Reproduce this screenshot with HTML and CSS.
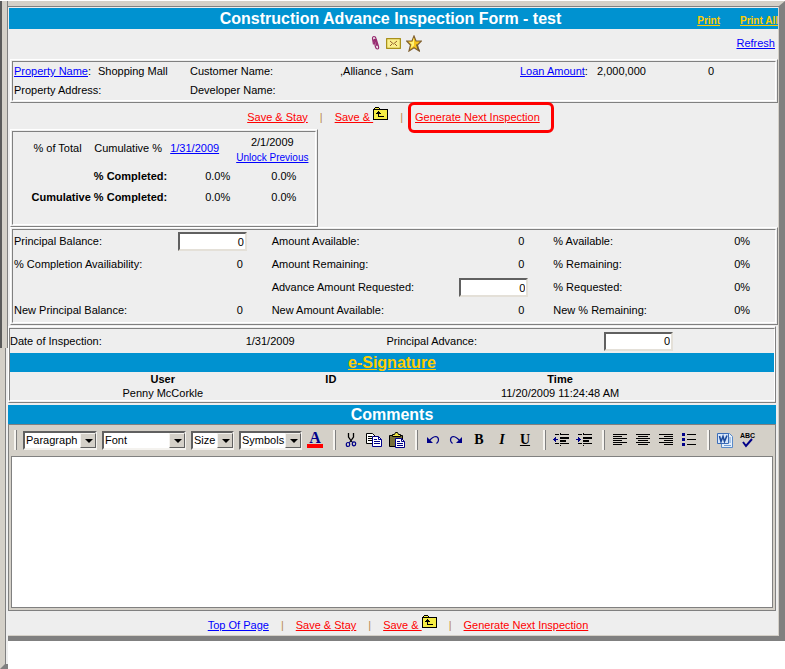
FILE: index.html
```html
<!DOCTYPE html>
<html lang="en">
<head>
<meta charset="utf-8">
<title>Construction Advance Inspection Form - test</title>
<link rel="stylesheet" href="styles.css">
</head>
<body>
<svg class="defs" aria-hidden="true">
  <symbol id="folder" viewBox="0 0 15 13">
    <path d="M1 3h13v9H1zM2 1h4v2H2z" fill="#f5ed45"/>
    <path d="M2 0h4v1H2zM1 1h1v1H1zM6 1h1v1H6zM0 2h15v1H0zM0 2h1v11H0zM14 2h1v11h-1zM0 12h15v1H0zM5 4h1v1H5zM4 5h3v1H4zM3 6h5v1H3zM5 7h1v3H5zM5 9h6v1H5z" fill="#000"/>
  </symbol>
</svg>
<div class="page">
  <div class="rail"><div class="rail-upper"></div><div class="rail-lower"></div></div>
  <main class="frame" id="top">
    <header class="bar title-bar">
      <h1>Construction Advance Inspection Form - test</h1>
      <nav class="print"><a href="#">Print</a><a href="#">Print All</a></nav>
    </header>

    <div class="icon-row">
      <div class="icon-links">
        <a href="#" aria-label="Attachments"><svg width="10" height="16" viewBox="0 0 10 16" fill="none" stroke="#96286e" stroke-width="1.200"><path d="M2.500 9.500L1.500 3.500Q1.500 1.500 3 1.500Q4.500 1.500 5 3.500L7.500 11.500Q8 14 6.500 14Q5 14 4.500 12L3 5.500Q3 4 4 4.500L6 11"/></svg></a>
        <a href="#" aria-label="E-mail"><svg width="15" height="11" viewBox="0 0 15 11"><rect x=".5" y=".5" width="14" height="10" rx="1" fill="#fbf08c" stroke="#a8901c" stroke-width="1.500"/><path d="M4 3l3.500 3L11 3M4 8l2-2M11 8L9 6" fill="none" stroke="#94602c"/></svg></a>
        <a href="#" aria-label="Favorites"><svg width="16" height="17" viewBox="0 0 16 17"><path d="M8 1l2 5h5.400l-4 4 1.800 6L8 12.800 3 16l1.500-6L.6 6H6z" fill="#f6c41c" stroke="#806030" stroke-width="1.200"/><path d="M8 2.500v8l-3.500 3 1.300-4.300L3 7h3.500z" fill="#fff27a"/><path d="M10.500 9.500l1.500 5L14 15.500" fill="none" stroke="#66553a"/></svg></a>
      </div>
      <a class="refresh" href="#">Refresh</a>
    </div>

    <section class="panel">
      <div class="panel-in property">
        <span><a href="#">Property Name</a>:</span><span>Shopping Mall</span><span>Customer Name:</span><span>,Alliance , Sam</span><span><a href="#">Loan Amount</a>:</span><span>2,000,000</span><span>0</span>
        <span class="wide">Property Address:</span><span class="wide">Developer Name:</span>
      </div>
    </section>

    <nav class="actions">
      <a href="#">Save &amp; Stay</a><i>|</i>
      <a class="save-up" href="#">Save &amp;&nbsp;<svg width="15" height="13"><use href="#folder"/></svg></a><i>|</i>
      <span class="callout"><a href="#">Generate Next Inspection</a></span>
    </nav>

    <section class="panel totals">
      <div class="panel-in">
        <table>
          <thead>
            <tr><th class="c-total">% of Total</th><th class="c-cumulative">Cumulative %</th><th class="c-date"><a href="#">1/31/2009</a></th><th class="c-next">2/1/2009<br><a class="small" href="#">Unlock Previous</a></th></tr>
          </thead>
          <tbody>
            <tr><th colspan="2">% Completed:</th><td>0.0%</td><td class="c-last">0.0%</td></tr>
            <tr><th colspan="2">Cumulative % Completed:</th><td>0.0%</td><td class="c-last">0.0%</td></tr>
          </tbody>
        </table>
      </div>
    </section>

    <section class="panel">
      <div class="panel-in balances">
        <label for="principal">Principal Balance:</label><input id="principal" type="text" value="0">
        <span>Amount Available:</span><output>0</output>
        <span>% Available:</span><output>0%</output>
        <span>% Completion Availiability:</span><output>0</output>
        <span>Amount Remaining:</span><output>0</output>
        <span>% Remaining:</span><output>0%</output>
        <span></span><span></span>
        <label for="advance">Advance Amount Requested:</label><input id="advance" type="text" value="0">
        <span>% Requested:</span><output>0%</output>
        <span>New Principal Balance:</span><output>0</output>
        <span>New Amount Available:</span><output>0</output>
        <span>New % Remaining:</span><output>0%</output>
      </div>
    </section>

    <section class="panel signature">
      <div class="panel-in">
        <div class="inspection">
          <span>Date of Inspection:</span><span>1/31/2009</span>
          <label for="padvance">Principal Advance:</label><input id="padvance" type="text" value="0">
        </div>
        <h2 class="bar"><a href="#">e-Signature</a></h2>
        <table>
          <thead><tr><th class="c-user">User</th><th class="c-id">ID</th><th>Time</th></tr></thead>
          <tbody><tr><td>Penny McCorkle</td><td></td><td>11/20/2009 11:24:48 AM</td></tr></tbody>
        </table>
      </div>
    </section>

    <section class="comments">
      <h2 class="bar"><label for="comments">Comments</label></h2>
      <div class="editor">
        <div class="toolbar">
          <span class="sep"></span>
          <div class="group selects">
            <span class="pick paragraph"><select aria-label="Paragraph"><option>Paragraph</option></select></span>
            <span class="pick font"><select aria-label="Font"><option>Font</option></select></span>
            <span class="pick size"><select aria-label="Size"><option>Size</option></select></span>
            <span class="pick symbols"><select aria-label="Symbols"><option>Symbols</option></select></span>
            <button type="button" class="glyph color" aria-label="Text color"><span>A</span></button>
          </div>
          <span class="sep"></span>
          <div class="group">
            <button type="button" aria-label="Cut"><svg viewBox="0 0 16 16"><path d="M5.500 1v4L9 10M10.500 1v4L7 10" fill="none" stroke="#000" stroke-width="1.300"/><path d="M7 9.500L6 11M9 9.500l1 1.500" stroke="#008"/><ellipse cx="5" cy="12.500" rx="1.700" ry="2" fill="none" stroke="#008" stroke-width="1.200"/><ellipse cx="11" cy="11.800" rx="1.700" ry="2" fill="none" stroke="#008" stroke-width="1.200"/></svg></button>
            <button type="button" aria-label="Copy"><svg viewBox="0 0 16 16"><path d="M.5 1.500h6l3 3v7h-9z" fill="#fff" stroke="#000"/><path d="M2 4.500h4M2 6.500h5M2 8.500h5" stroke="#000"/><path d="M6.500 4.500h6l3 3v7h-9z" fill="#fff" stroke="#008"/><path d="M12.500 4.500v3h3M8 7.500h3M8 9.500h6M8 11.500h6" fill="none" stroke="#008"/></svg></button>
            <button type="button" aria-label="Paste"><svg viewBox="0 0 16 16"><path d="M.5 3.500h13v11H.5z" fill="#77703a" stroke="#000"/><path d="M3.500 2.500h2l1-2h2l1 2h2v2h-8z" fill="#f2e744" stroke="#000"/><path d="M6.500 6.500h6l3 3v6h-9z" fill="#fff" stroke="#008"/><path d="M12.500 6.500v3h3M8 9.500h3M8 11.500h6M8 13.500h6" fill="none" stroke="#008"/></svg></button>
          </div>
          <span class="sep"></span>
          <div class="group">
            <button type="button" aria-label="Undo"><svg viewBox="0 0 16 16"><path d="M2 5v6h6z" fill="#008"/><path d="M4.500 8.500Q8 4.500 11 4.500Q13.500 5 13.500 8Q13.500 10 11.500 11.500" fill="none" stroke="#008" stroke-width="1.200"/></svg></button>
            <button type="button" aria-label="Redo"><svg viewBox="0 0 16 16"><path d="M14 5v6H8z" fill="#008"/><path d="M11.500 8.500Q8 4.500 5 4.500Q2.500 5 2.500 8Q2.500 10 4.500 11.500" fill="none" stroke="#008" stroke-width="1.200"/></svg></button>
            <button type="button" class="glyph bold">B</button>
            <button type="button" class="glyph italic">I</button>
            <button type="button" class="glyph underline">U</button>
          </div>
          <span class="sep"></span>
          <div class="group">
            <button type="button" aria-label="Decrease indent"><svg viewBox="0 0 16 16" shape-rendering="crispEdges"><path d="M2 2.500h4M8 2.500h8M2 11.500h4M8 11.500h8M7.500 1v2M7.500 11v1M7.500 13v1" stroke="#000"/><path d="M7 5h9v2H7zM7 8h6v2H7z"/><path d="M0 7.500h5" stroke="#008"/><path d="M1 6h1v3H1zM2 5h1v5H2z" fill="#008"/></svg></button>
            <button type="button" aria-label="Increase indent"><svg viewBox="0 0 16 16" shape-rendering="crispEdges"><path d="M2 2.500h4M8 2.500h8M2 11.500h4M8 11.500h8M7.500 1v2M7.500 11v1M7.500 13v1" stroke="#000"/><path d="M7 5h9v2H7zM7 8h6v2H7z"/><path d="M0 7.500h5" stroke="#008"/><path d="M3 6h1v3H3zM2 5h1v5H2z" fill="#008"/></svg></button>
          </div>
          <span class="sep"></span>
          <div class="group">
            <button type="button" aria-label="Align left"><svg viewBox="0 0 16 16" shape-rendering="crispEdges"><path d="M1 2.500h14M1 4.500h9M1 6.500h14M1 8.500h9M1 10.500h14M1 12.500h9" stroke="#000"/></svg></button>
            <button type="button" aria-label="Align center"><svg viewBox="0 0 16 16" shape-rendering="crispEdges"><path d="M1 2.500h14M3 4.500h10M1 6.500h14M3 8.500h10M1 10.500h14M3 12.500h10" stroke="#000"/></svg></button>
            <button type="button" aria-label="Align right"><svg viewBox="0 0 16 16" shape-rendering="crispEdges"><path d="M1 2.500h14M6 4.500h9M1 6.500h14M6 8.500h9M1 10.500h14M6 12.500h9" stroke="#000"/></svg></button>
            <button type="button" aria-label="Bulleted list"><svg viewBox="0 0 16 16" shape-rendering="crispEdges"><path d="M1 1h3v3H1zM1 6h3v3H1zM1 11h3v3H1z" fill="#008"/><path d="M6 2.500h9M6 7.500h9M6 12.500h9" stroke="#000"/></svg></button>
          </div>
          <span class="sep"></span>
          <div class="group">
            <button type="button" aria-label="Paste from Word"><svg viewBox="0 0 16 16"><path d="M4.500 1.500h8l3 3v11h-11z" fill="#e4effb" stroke="#5a8ac8"/><path d="M12 6h2M12 8h2M12 10h2M7 13.500h7" stroke="#6f9bd6"/><path d="M.5 1.500h11v10H.5z" fill="#d7e6fa" stroke="#3b6db8"/><path d="M2.500 4l1.500 5.500L6 4.500l1.500 5L10 3.500" fill="none" stroke="#1c4a9c" stroke-width="1.600"/></svg></button>
            <button type="button" class="spell" aria-label="Check spelling"><small>ABC</small><svg viewBox="0 0 16 16"><path d="M3 10l3 4 6-7" fill="none" stroke="#008" stroke-width="2"/></svg></button>
          </div>
        </div>
        <textarea id="comments"></textarea>
      </div>
    </section>

    <nav class="actions bottom">
      <a class="blue" href="#top">Top Of Page</a><i>|</i>
      <a href="#">Save &amp; Stay</a><i>|</i>
      <a class="save-up" href="#">Save &amp;&nbsp;<svg width="15" height="13"><use href="#folder"/></svg></a><i>|</i>
      <a href="#">Generate Next Inspection</a>
    </nav>
  </main>
</div>
</body>
</html>
```
FILE: styles.css
```css
* { box-sizing: border-box; }
body {
  margin: 0;
  background: #fff;
  color: #000;
  font: 11px/15px "Liberation Sans", Arial, sans-serif;
}
.defs { position: absolute; width: 0; height: 0; }
a { color: #00f; }
svg { display: block; }
table { border-collapse: collapse; width: 100%; table-layout: fixed; }
th, td { padding: 0; }

.page {
  display: grid;
  grid-template-columns: 8px minmax(0, 1fr);
  align-items: start;
  min-height: 100vh;
  padding-top: 1px;
}
.rail { display: flex; flex-direction: column; align-self: stretch; }
.rail-upper {
  flex: 350;
  background: #d4d0c8;
  border-left: 2px solid #5a5a5a;
  border-right: 1px solid #808080;
}
.rail-lower {
  flex: 318;
  background: #eee;
  border-left: 5px solid #d4d0c8;
  border-bottom: 5px solid #808080;
  box-shadow: inset 1px 0 #808080;
}
.frame {
  background: #eee;
  border: 0 solid #808080;
  border-width: 5px 6px 5px 0;
  border-top-color: #d4d0c8;
  box-shadow: inset 0 1px #808080, inset 0 -1px #d4d0c8, inset -1px 0 #d4d0c8;
  padding: 2px 0 1px;
}

.bar {
  margin: 0;
  background: #0092d0;
  color: #fff;
  text-align: center;
  font-size: 16px;
  line-height: 19px;
  font-weight: bold;
}
.bar a { color: #fc0; }
.title-bar {
  display: grid;
  grid-template-columns: 1fr auto 1fr;
  margin: 0 1px;
}
.title-bar h1 {
  grid-column: 2;
  margin: 0;
  padding-right: 6px;
  font-size: 16px;
  line-height: 21px;
}
.print {
  display: flex;
  justify-content: flex-end;
  gap: 20px;
  padding-top: 5px;
  font-size: 10px;
  line-height: 15px;
}

.icon-row {
  display: grid;
  grid-template-columns: 1fr auto 1fr;
  align-items: center;
  height: 30px;
  padding: 0 4px 2px;
}
.icon-row { padding-left: 10px; }
.icon-links { grid-column: 2; display: flex; align-items: center; gap: 5px; }
.refresh { justify-self: end; }

.panel {
  margin: 0 1px 0 2px;
  padding: 1px;
  border: 1px solid;
  border-color: #fff #808080 #808080 #fff;
}
.panel-in {
  border: 1px solid;
  border-color: #808080 #fff #fff #808080;
}

.property {
  display: grid;
  grid-template-columns: 84fr 92fr 150fr 180fr 77fr 111fr 67fr;
  line-height: 19px;
  padding-left: 1px;
}
.wide { grid-column: span 2; }

.actions {
  display: flex;
  justify-content: center;
  align-items: center;
  gap: 12px;
  height: 26px;
  padding-top: 2px;
}
.actions a { color: #f00; }
.actions a.blue { color: #00f; }
.actions i { font-style: normal; color: #b98a50; }
.actions .save-up { display: flex; }
.save-up svg { margin-top: -3px; }
.callout { position: relative; }
.callout::after {
  content: "";
  position: absolute;
  inset: -8px -14px -8px -7px;
  border: 3px solid #f00;
  border-radius: 6px;
  pointer-events: none;
}

.totals { width: 40%; }
.totals .panel-in { padding: 2px 1px 16px; }
.totals th { font-weight: normal; }
.totals tbody th { font-weight: bold; text-align: right; }
.totals tbody tr { height: 21px; }
.totals thead tr { height: 32px; }
.totals thead th { padding-bottom: 3px; }
.totals thead .c-next { padding-bottom: 0; }
.totals td { text-align: right; }
.c-total { width: 25%; padding-left: 12px; }
.c-cumulative { width: 26%; }
.totals .c-date { width: 21%; padding-left: 3px; text-align: left; }
.totals .c-last { padding-right: 18px; }
.small { font-size: 10px; }

input, textarea, select, button { font: inherit; color: inherit; margin: 0; }
input {
  width: 69px;
  height: 19px;
  padding: 0 1px;
  text-align: right;
  background: #fff;
  border: 2px solid;
  border-color: #606060 #e4e0d8 #e4e0d8 #606060;
  border-radius: 0;
}

.balances {
  display: grid;
  grid-template-columns: 164fr 94fr 188fr 94fr 146fr 76fr;
  grid-auto-rows: 23px;
  align-items: center;
  padding-left: 1px;
}
.balances output { width: 65px; text-align: right; }
.balances output:nth-child(6n) { width: 51px; }

.signature { margin: 1px 3px 2px 0; padding: 1px 0; }
.inspection {
  display: grid;
  grid-template-columns: 236fr 141fr 218fr 170fr;
  align-items: center;
  height: 24px;
}
.signature table { text-align: center; line-height: 14px; }
.c-user { width: 40%; }
.c-id { width: 4%; }

.comments { margin-right: 3px; }
.editor {
  background: #d4d0c8;
  border: 1px solid #808080;
  padding: 0 2px 2px;
}
.toolbar {
  display: flex;
  align-items: center;
  height: 31px;
  padding: 0 0 1px 3px;
}
.group { display: flex; align-items: center; gap: 7px; margin-left: 7px; }
.selects { gap: 5px; margin-left: 6px; }
.sep {
  width: 3px;
  height: 20px;
  border-left: 2px solid #f6f4f0;
  border-right: 1px solid #808080;
}
.group + .sep { margin-left: 10px; }
.toolbar button {
  position: relative;
  flex: none;
  width: 16px;
  height: 16px;
  padding: 0;
  border: 0;
  background: none;
}
.toolbar .glyph { font: bold 14px/16px "Liberation Serif", serif; text-align: center; }
.toolbar .italic { font-style: italic; }
.toolbar .underline { text-decoration: underline; }
.toolbar .color {
  color: #008;
  font-size: 16px;
  line-height: 12px;
  border-bottom: 4px solid #f00;
}
.spell small {
  position: absolute;
  top: 0;
  left: 0;
  font: bold 7px/7px "Liberation Sans", sans-serif;
}

.pick { position: relative; display: flex; height: 19px; }
.paragraph { width: 74px; }
.font { width: 84px; }
.size { width: 43px; }
.symbols { width: 63px; }
.pick select {
  appearance: none;
  width: 100%;
  padding: 0 0 0 1px;
  border: 2px solid;
  border-color: #606060 #f4f2ee #f4f2ee #606060;
  border-radius: 0;
  background: #fff;
  font: 11px/15px "Liberation Sans", sans-serif;
}
.pick::before {
  content: "";
  position: absolute;
  top: 2px;
  right: 1px;
  bottom: 2px;
  width: 14px;
  background: #d4d0c8;
  border: 1px solid;
  border-color: #f4f2ee #606060 #606060 #f4f2ee;
  pointer-events: none;
}
.pick::after {
  content: "";
  position: absolute;
  top: 8px;
  right: 4px;
  border: 4px solid transparent;
  border-top-color: #000;
  border-bottom: 0;
  pointer-events: none;
}
textarea {
  display: block;
  width: 100%;
  height: 152px;
  resize: vertical;
  border: 1px solid #808080;
  border-radius: 0;
  background: #fff;
}
textarea::-webkit-resizer { display: none; }
.bottom { height: 24px; padding: 5px 0 0 9px; }
```
